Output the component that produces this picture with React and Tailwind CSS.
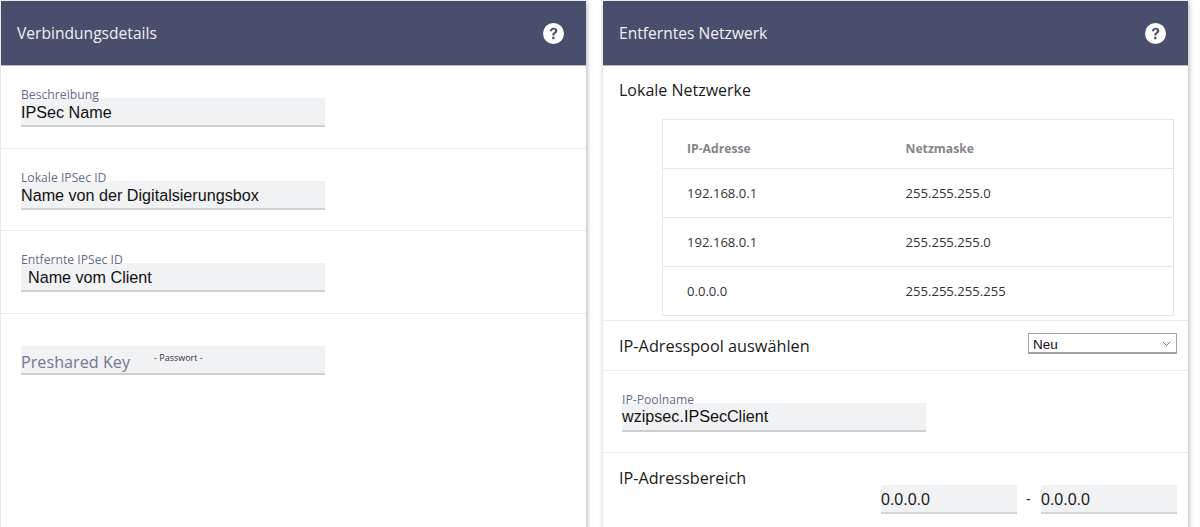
import React from 'react';

const sans = "font-['Open_Sans',sans-serif]";
const arial = "font-['Liberation_Sans',sans-serif]";

const HelpIcon = () => (
  <svg width="21" height="21" viewBox="0 0 21 21" className="shrink-0">
    <circle cx="10.5" cy="10.5" r="10.5" fill="#ffffff" />
    <path d="M6.9 8.2c.1-2.2 1.6-3.5 3.8-3.5 2.1 0 3.6 1.2 3.6 3 0 1.3-.7 2-1.7 2.7-.9.6-1.2 1-1.2 1.8v.4H9.3v-.6c0-1.2.5-1.9 1.5-2.6.8-.6 1.2-1 1.2-1.6 0-.8-.6-1.3-1.4-1.3-.9 0-1.5.6-1.6 1.7H6.9z" fill="#4a4e6d" />
    <rect x="9.2" y="13.8" width="2.3" height="2.4" rx="0.4" fill="#4a4e6d" />
  </svg>
);

const Panel = ({ title, children }) => (
  <section className="w-[585px] h-[540px] shrink-0 bg-white shadow-[1px_1px_5px_rgba(0,0,0,0.3)]">
    <header className="h-[65px] bg-[#4a4e6d] border-b border-[#b5b7c5] flex items-center justify-between pl-4 pr-[22px]">
      <h2 className={`${sans} text-[15.6px] pt-[2px] text-[#eef0f5]`}>{title}</h2>
      <HelpIcon />
    </header>
    {children}
  </section>
);

const Field = ({ label, value, indent, tight }) => (
  <div className="w-[304px]">
    <div className={`${sans} text-[12.2px] leading-[14px] h-[10px] text-[#676b8a] relative`}>{label}</div>
    <div className={`${arial} h-[29px] bg-[#f1f2f4] border-b-2 border-[#cfcfcf] text-[16.15px] text-[#111] ${tight ? 'leading-[26px]' : 'leading-[28px]'} ${indent ? 'pl-[7px]' : ''}`}>
      {value}
    </div>
  </div>
);

const FieldRow = ({ label, value, indent, height }) => (
  <div className={`border-b border-[#ebebeb] pl-5 pt-[22px] ${height}`}>
    <Field label={label} value={value} indent={indent} />
  </div>
);

const networks = [
  ['192.168.0.1', '255.255.255.0'],
  ['192.168.0.1', '255.255.255.0'],
  ['0.0.0.0', '255.255.255.255'],
];

const SmallInput = ({ value }) => (
  <div className={`${arial} w-[136px] h-[29px] bg-[#f1f2f4] border-b-2 border-[#d5d5d5] text-[16px] leading-[29px] text-[#222]`}>
    {value}
  </div>
);

export default function App() {
  return (
    <div className="w-[1200px] h-[527px] overflow-hidden bg-white flex gap-[17px] pt-px pl-px">
      {/* Verbindungsdetails */}
      <Panel title="Verbindungsdetails">
        <FieldRow label="Beschreibung" value="IPSec Name" height="h-[83px]" />
        <FieldRow label="Lokale IPSec ID" value="Name von der Digitalsierungsbox" height="h-[82px]" />
        <FieldRow label="Entfernte IPSec ID" value="Name vom Client" indent height="h-[83px]" />
        <div className="pl-5 pt-8">
          <div className="w-[304px] h-[29px] bg-[#f1f2f4] border-b-2 border-[#cfcfcf] flex">
            <span className={`${sans} text-[16.2px] leading-[33px] text-[#73778f] w-[133px]`}>Preshared Key</span>
            <span className={`${sans} text-[9px] leading-[24px] text-[#333]`}>- Passwort -</span>
          </div>
        </div>
      </Panel>

      {/* Entferntes Netzwerk */}
      <Panel title="Entferntes Netzwerk">
        <div className="h-[255px] border-b border-[#ebebeb] pl-4 pr-[14px]">
          <h3 className={`${sans} text-[16px] leading-[22px] pt-[13px] h-[53px] text-[#1a1a1a]`}>Lokale Netzwerke</h3>
          <table className={`${sans} ml-[43px] w-[512px] border border-[#e6e6e6] border-collapse table-fixed text-[13.1px]`}>
            <thead>
              <tr className="h-[49px] text-left text-[12.2px] font-bold text-[#85858a]">
                <th className="pl-6 pt-[10px] w-[243px]">IP-Adresse</th>
                <th className="pt-[10px]">Netzmaske</th>
              </tr>
            </thead>
            <tbody className="text-[#333]">
              {networks.map((row, i) => (
                <tr key={i} className="h-[49px] border-t border-[#e6e6e6]">
                  <td className="pl-6 pt-[2px]">{row[0]}</td>
                  <td className="pt-[2px]">{row[1]}</td>
                </tr>
              ))}
            </tbody>
          </table>
        </div>

        <div className="h-[50px] border-b border-[#ebebeb] pl-4 pr-[11px] flex items-center justify-between">
          <span className={`${sans} text-[16.3px] pt-[1px] text-[#1a1a1a]`}>IP-Adresspool auswählen</span>
          <div className={`${arial} w-[149px] h-[21px] border border-[#a3a3a3] border-b-2 pl-1 flex items-center justify-between text-[13.5px] leading-[21px] text-[#111] mb-1`}>
            <span className="pt-[2px]">Neu</span>
            <svg width="9" height="6" viewBox="0 0 9 6" className="mr-[5px] mt-[1px]">
              <path d="M1 1l3.5 3.5L8 1" fill="none" stroke="#777" strokeWidth="1" />
            </svg>
          </div>
        </div>

        <div className="h-[82px] border-b border-[#ebebeb] pl-[19px] pt-[22px]">
          <Field label="IP-Poolname" value="wzipsec.IPSecClient" tight />
        </div>

        <div className="pl-4 pr-[11px] pt-[14px]">
          <div className={`${sans} text-[16.2px] leading-[22px] h-[18px] text-[#1a1a1a]`}>IP-Adressbereich</div>
          <div className="flex justify-end items-center gap-[10px]">
            <SmallInput value="0.0.0.0" />
            <span className={`${arial} w-[4px] -ml-[1px] mr-[1px] text-[14px] text-[#222]`}>-</span>
            <SmallInput value="0.0.0.0" />
          </div>
        </div>
      </Panel>
    </div>
  );
}
